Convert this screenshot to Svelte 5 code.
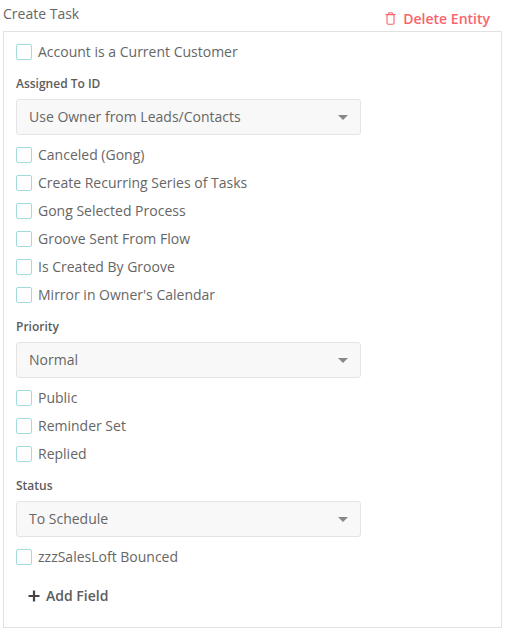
<script>
  const sections = [
    { checks: ['Account is a Current Customer'] },
    { label: 'Assigned To ID', value: 'Use Owner from Leads/Contacts' },
    { checks: ['Canceled (Gong)', 'Create Recurring Series of Tasks', 'Gong Selected Process', 'Groove Sent From Flow', 'Is Created By Groove', "Mirror in Owner's Calendar"] },
    { label: 'Priority', value: 'Normal' },
    { checks: ['Public', 'Reminder Set', 'Replied'] },
    { label: 'Status', value: 'To Schedule' },
    { checks: ['zzzSalesLoft Bounced'] }
  ];
</script>

<div class="page">
  <header class="head">
    <span class="title">Create Task</span>
    <button class="delete">
      <svg width="11" height="13" viewBox="0 0 11 13" fill="none" stroke="#f9636b" stroke-width="1.1">
        <path d="M0.5 2.6H10.5M2 2.6V11a1.2 1.2 0 0 0 1.2 1.2H7.8A1.2 1.2 0 0 0 9 11V2.6M3.6 2.6V1.6A1 1 0 0 1 4.6 .7H6.4A1 1 0 0 1 7.4 1.6V2.6"/>
      </svg>
      Delete Entity
    </button>
  </header>
  <section class="card">
    {#each sections as s}
      {#if s.checks}
        <div class="checks">
          {#each s.checks as c}
            <label class="check"><span class="box"></span>{c}</label>
          {/each}
        </div>
      {:else}
        <div class="field">
          <div class="label">{s.label}</div>
          <div class="select">{s.value}<span class="caret"></span></div>
        </div>
      {/if}
    {/each}
    <button class="add">
      <svg width="12" height="12" viewBox="0 0 12 12"><path d="M6 .5V11.5M.5 6H11.5" stroke="#444" stroke-width="2.2"/></svg>
      Add Field
    </button>
  </section>
</div>

<style>
  :global(body) { margin: 0; background: #fff; }
  .page { width: 506px; height: 633px; box-sizing: border-box; padding: 0 4px 0 3px; font-family: "Open Sans", sans-serif; font-size: 14px; color: #666; }
  .head { display: flex; justify-content: space-between; height: 31px; }
  .title { line-height: 28px; color: #666; }
  .delete { display: flex; align-items: center; gap: 7px; height: 16px; margin: 10px 12px 0 0; padding: 0; border: 0; background: none; font: 600 14px "Open Sans", sans-serif; color: #f9636b; }
  .card { border: 1px solid #e2e2e2; height: 597px; box-sizing: border-box; padding: 5px 12px 0; }
  .checks { display: flex; flex-direction: column; }
  .check { display: flex; align-items: center; gap: 6px; height: 28px; }
  .box { width: 14px; height: 14px; margin-top: 2px; border: 1px solid #a3dadb; border-radius: 2px; background: #fff; }
  .field { padding-top: 11px; padding-bottom: 5px; }
  .label { font-size: 12px; font-weight: 600; color: #5c5c5c; line-height: 16px; margin-bottom: 7px; }
  .select { position: relative; width: 345px; height: 36px; box-sizing: border-box; border: 1px solid #e4e4e4; border-radius: 3px; background: #f8f8f8; padding-left: 12px; line-height: 34px; }
  .caret { position: absolute; right: 12px; top: 15px; border-left: 5px solid transparent; border-right: 5px solid transparent; border-top: 5px solid #888; }
  .add { display: flex; align-items: center; gap: 6px; margin: 16px 0 0 12px; padding: 0; border: 0; background: none; font: 600 14px "Open Sans", sans-serif; color: #5c5c5c; }
</style>
